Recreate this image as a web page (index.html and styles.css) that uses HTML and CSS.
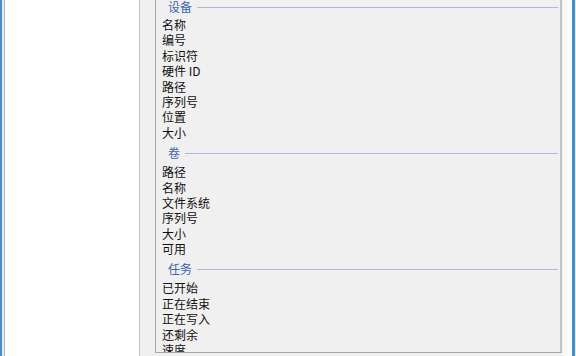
FILE: index.html
```
<!DOCTYPE html>
<html lang="zh">
<head>
<meta charset="utf-8">
<link rel="stylesheet" href="styles.css">
</head>
<body>
<div class="window">
  <div class="frame-edge"></div>
  <div class="frame-pad"></div>
  <div class="list-panel"></div>
  <div class="gap"></div>
  <div class="detail-panel">
    <div class="section">
      <div class="sec-head first"><span class="sec-title">设备</span><span class="sec-line"></span></div>
      <div class="item">名称</div>
      <div class="item">编号</div>
      <div class="item">标识符</div>
      <div class="item">硬件 ID</div>
      <div class="item">路径</div>
      <div class="item">序列号</div>
      <div class="item">位置</div>
      <div class="item">大小</div>
    </div>
    <div class="section">
      <div class="sec-head"><span class="sec-title">卷</span><span class="sec-line"></span></div>
      <div class="item">路径</div>
      <div class="item">名称</div>
      <div class="item">文件系统</div>
      <div class="item">序列号</div>
      <div class="item">大小</div>
      <div class="item">可用</div>
    </div>
    <div class="section">
      <div class="sec-head"><span class="sec-title">任务</span><span class="sec-line"></span></div>
      <div class="item">已开始</div>
      <div class="item">正在结束</div>
      <div class="item">正在写入</div>
      <div class="item">还剩余</div>
      <div class="item">速度</div>
    </div>
  </div>
  <div class="right-strip"></div>
  <div class="frame-edge end"></div>
</div>
</body>
</html>
```
FILE: styles.css
```
html, body {
  margin: 0;
  padding: 0;
  width: 576px;
  height: 356px;
  overflow: hidden;
  background: #f0f0f0;
  font-family: "Noto Sans CJK SC", "Liberation Sans", sans-serif;
  font-size: 12px;
  color: #111;
}
.window {
  display: flex;
  width: 576px;
  height: 356px;
}
.frame-edge {
  width: 2px;
  flex: none;
  background: #3f8fd2;
}
.frame-edge.end {
  width: 3px;
}
.frame-pad {
  width: 2px;
  flex: none;
  background: #e8e8e8;
}
.list-panel {
  width: 134px;
  flex: none;
  background: #fff;
  border-left: 1px solid #b9b9b9;
  border-right: 1px solid #c4c4c4;
}
.gap {
  width: 15px;
  flex: none;
  background: #f0f0f0;
}
.detail-panel {
  width: 407px;
  flex: none;
  height: 353px;
  box-sizing: border-box;
  border-left: 1px solid #a8a8a8;
  border-right: 2px solid #c4c4c4;
  border-bottom: 1px solid #a8a8a8;
  padding-top: 1px;
  padding-left: 6px;
  padding-right: 2px;
  background: #f0f0f0;
  overflow: hidden;
}
.right-strip {
  width: 9px;
  flex: none;
  margin-left: 1px;
  background: #fbfbfb;
}
.sec-head {
  display: flex;
  align-items: center;
  height: 12px;
  margin-top: 7px;
  margin-bottom: 5px;
  padding-left: 6px;
}
.sec-head.first {
  margin-top: 0;
  margin-bottom: 4px;
}
.sec-title {
  color: #3b63b5;
  line-height: 12px;
}
.sec-line {
  flex: 1;
  height: 1px;
  margin-left: 5px;
  background: #a9bbd9;
}
.item {
  height: 15.4px;
  line-height: 15.4px;
  white-space: nowrap;
}
```
